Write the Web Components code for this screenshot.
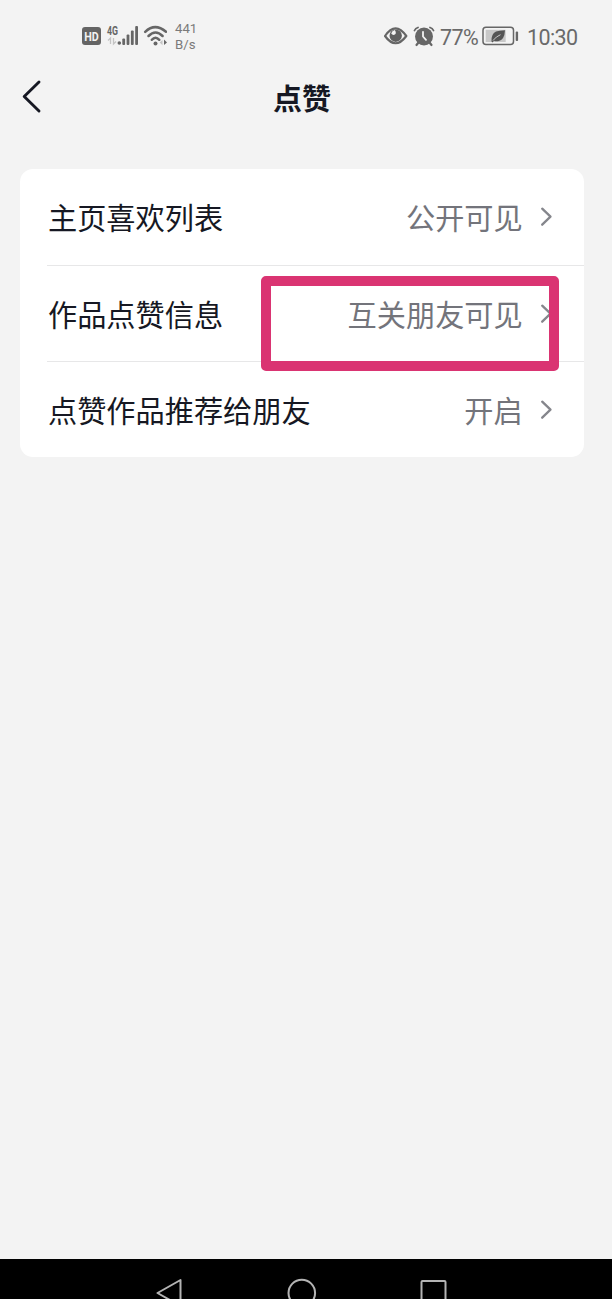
<!DOCTYPE html>
<html lang="zh-CN">
<head>
<meta charset="utf-8">
<meta name="viewport" content="width=device-width, initial-scale=1">
<title>点赞</title>
<style>
    html, body {
        margin: 0;
        height: 100%;
        overflow: hidden;
    }
    body {
        background: #f3f3f3;
        color: #161823;
        font-family: "Noto Sans CJK SC", sans-serif;
    }
</style>
</head>
<body>
<app-screen>
    <status-bar slot="status" speed="441" unit="B/s" battery="77%" time="10:30"></status-bar>
    <nav-header slot="header">点赞</nav-header>
    <setting-list>
        <setting-row value="公开可见">主页喜欢列表</setting-row>
        <setting-row value="互关朋友可见" marked>作品点赞信息</setting-row>
        <setting-row value="开启">点赞作品推荐给朋友</setting-row>
    </setting-list>
    <system-keys slot="keys"></system-keys>
</app-screen>

<script>
// Attach an open shadow root and fill it
function render(host, html) {
    host.attachShadow({ mode: 'open' }).innerHTML = html;
}

class AppScreen extends HTMLElement {
    constructor() {
        super();
        render(this, `
            <style>
                :host {
                    display: flex;
                    flex-direction: column;
                    height: 1299px;
                    width: 612px;
                    overflow: hidden;
                }
                main { flex: 1; padding: 39px 28px 0 20px; }
            </style>
            <slot name="status"></slot>
            <slot name="header"></slot>
            <main><slot></slot></main>
            <slot name="keys"></slot>
        `);
    }
}

class StatusBar extends HTMLElement {
    connectedCallback() {
        if (this.shadowRoot) return;
        render(this, `
            <style>
                :host {
                    display: flex;
                    justify-content: space-between;
                    align-items: center;
                    box-sizing: border-box;
                    height: 64px;
                    padding: 8px 34px 0 82px;
                    color: #6a6a6a;
                    font-family: Roboto, "Noto Sans", sans-serif;
                }
                .group { display: flex; align-items: center; }
                svg { display: block; flex: none; }
                .speed {
                    margin: 1px 0 0 8px;
                    font-size: 13.200px;
                    line-height: 16px;
                    color: #7a7a7a;
                }
                .num {
                    font-size: 21.500px;
                    line-height: 24px;
                    letter-spacing: -0.600px;
                    white-space: nowrap;
                }
                .battery { width: 38px; margin: 3px 4px 0 5px; }
                .time { width: 51px; margin-top: 3px; }
                .battery-icon { margin-right: 8px; }
            </style>
            <div class="group">
                <svg width="85" height="24" viewBox="0 0 85 24">
                    <rect x="0" y="3" width="19" height="18" rx="3" fill="#646464"/>
                    <text x="9.5" y="16.500" text-anchor="middle" textLength="14.500" lengthAdjust="spacingAndGlyphs"
                        font-family="Roboto" font-size="12.500" font-weight="700" fill="#f2f2f2">HD</text>
                    <text x="25" y="10.800" textLength="11" lengthAdjust="spacingAndGlyphs"
                        font-family="Roboto" font-size="12.500" font-weight="700" fill="#666">4G</text>
                    <path d="M28.500 20v-6l-2.500 2.500M31.500 14v6l2.500-2.500" fill="none" stroke="#c4c4c4" stroke-width="1.300"/>
                    <g fill="#666">
                        <circle cx="37.300" cy="19" r="1.800"/>
                        <rect x="40.300" y="14.500" width="2.800" height="6.500" rx="1"/>
                        <rect x="44.600" y="10.500" width="2.800" height="10.500" rx="1"/>
                        <rect x="48.900" y="6.500" width="2.800" height="14.500" rx="1"/>
                        <rect x="53.200" y="2" width="2.800" height="19" rx="1"/>
                    </g>
                    <g fill="none" stroke="#666" stroke-width="2.500" stroke-linecap="round">
                        <path d="M63.200 7.800Q73-1.500 84 7.800"/>
                        <path d="M66.500 12Q73.500 5 80.600 12"/>
                        <path d="M69.800 15.800Q73.500 11.500 77.300 15.800"/>
                    </g>
                    <circle cx="73.500" cy="19.500" r="2" fill="#666"/>
                    <path d="M80.500 16v5.200l-2.800-2.600z" fill="#c4c4c4"/>
                    <path d="M82 15.500v5.500l3-2.600z" fill="#666"/>
                </svg>
                <div class="speed"><div>${this.getAttribute('speed')}</div><div>${this.getAttribute('unit')}</div></div>
            </div>
            <div class="group">
                <svg width="51" height="22" viewBox="0 0 51 22">
                    <path d="M1 11Q11.500-4.300 22.300 11Q11.500 25.500 1 11Z" fill="none" stroke="#666" stroke-width="2.200" stroke-linejoin="round"/>
                    <circle cx="11.700" cy="10.700" r="6.200" fill="#606060"/>
                    <path d="M10.800 5Q12.800 8.300 10.900 9.500Q8.800 10.700 7.200 8.500Q8 5.700 10.800 5Z" fill="#f3f3f3"/>
                    <g stroke="#666" stroke-linecap="round" fill="none">
                        <path d="M30.500 5.500Q31.500 3.300 34 2.500M46 2.500Q48.500 3.300 49.500 5.500" stroke-width="1.800"/>
                        <path d="M34.500 17.500l-2 2.500M45.500 17.500l2 2.500" stroke-width="2.200"/>
                    </g>
                    <circle cx="40" cy="11.500" r="9" fill="#666"/>
                    <path d="M39 6.800V11.500L42 14.800" fill="none" stroke="#f2f2f2" stroke-width="1.800" stroke-linecap="round"/>
                </svg>
                <span class="num battery">${this.getAttribute('battery')}</span>
                <svg class="battery-icon" width="37" height="20" viewBox="0 0 37 20">
                    <rect x="1" y="1.200" width="30.500" height="17.400" rx="3" fill="none" stroke="#666" stroke-width="1.500"/>
                    <rect x="3.700" y="3.800" width="20" height="12.200" fill="#c8c8c8"/>
                    <path d="M9.500 15.500Q9 8 14 5.500Q17 4.500 23 4.200Q22.500 14.500 16 15.200Q13.500 15.300 12 14.700L10.500 16.500Z" fill="#555"/>
                    <path d="M11 14.500Q14 10.500 18.500 8.700" fill="none" stroke="#c8c8c8" stroke-width="1"/>
                    <rect x="33.700" y="5.500" width="2.400" height="9.500" rx="1" fill="#666"/>
                </svg>
                <span class="num time">${this.getAttribute('time')}</span>
            </div>
        `);
    }
}

class NavHeader extends HTMLElement {
    constructor() {
        super();
        render(this, `
            <style>
                :host {
                    display: grid;
                    grid-template-columns: 60px 1fr 60px;
                    align-items: center;
                    height: 66px;
                    margin-right: 8px;
                }
                h1 {
                    margin: 0;
                    font-size: 29px;
                    line-height: 42px;
                    font-weight: 700;
                    text-align: center;
                }
                svg { display: block; margin: 0 0 2px 20px; }
            </style>
            <svg width="24" height="36" viewBox="0 0 24 36">
                <path d="M19 4L4.200 18.500L19 33" fill="none" stroke="#161823" stroke-width="2.900" stroke-linecap="round" stroke-linejoin="round"/>
            </svg>
            <h1><slot></slot></h1>
        `);
    }
}

class SettingList extends HTMLElement {
    constructor() {
        super();
        render(this, `
            <style>
                :host {
                    display: block;
                    background: #fff;
                    border-radius: 13px;
                }
                ::slotted(:not(:last-child)) { --line: #e7e7e8; }
                ::slotted(:last-child) { --height: 95px; }
            </style>
            <slot></slot>
        `);
    }
}

class SettingRow extends HTMLElement {
    connectedCallback() {
        if (this.shadowRoot) return;
        render(this, `
            <style>
                :host {
                    display: block;
                    position: relative;
                    padding-left: 27px;
                    font-size: 29.200px;
                    line-height: 44px;
                }
                .row {
                    display: flex;
                    align-items: center;
                    box-sizing: border-box;
                    height: var(--height, 96.600px);
                    padding: 0 31.300px 1px 1px;
                    border-bottom: 1.300px solid var(--line, transparent);
                }
                .label { flex: 1; }
                .value { color: #73747b; }
                svg { display: block; margin-left: 16px; }
                /* Highlight frame laid over the row */
                .mark {
                    position: absolute;
                    left: 241px;
                    top: 10.200px;
                    width: 298px;
                    height: 95px;
                    box-sizing: border-box;
                    border: 10px solid #da3472;
                    border-radius: 5px;
                    z-index: 1;
                }
            </style>
            <div class="row">
                <span class="label"><slot></slot></span>
                <span class="value">${this.getAttribute('value')}</span>
                <svg width="14" height="22" viewBox="0 0 14 22">
                    <path d="M3.200 3.700L11.500 11.700L3.200 19.700" fill="none" stroke="#85868c" stroke-width="2.300" stroke-linecap="round" stroke-linejoin="round"/>
                </svg>
            </div>
            ${this.hasAttribute('marked') ? '<div class="mark"></div>' : ''}
        `);
    }
}

class SystemKeys extends HTMLElement {
    constructor() {
        super();
        render(this, `
            <style>
                :host {
                    display: block;
                    height: 40px;
                    background: #000;
                    overflow: hidden;
                }
                .keys {
                    display: flex;
                    justify-content: space-between;
                    padding: 19px 164px 0 155px;
                }
                svg { display: block; }
                svg * { fill: none; stroke: #b4b4b4; stroke-width: 2; stroke-linejoin: round; }
            </style>
            <div class="keys">
                <svg width="30" height="30" viewBox="0 0 30 30"><path d="M25.500 2V28L2.500 15Z"/></svg>
                <svg width="30" height="30" viewBox="0 0 30 30"><circle cx="14.800" cy="15" r="13.300"/></svg>
                <svg width="30" height="30" viewBox="0 0 30 30"><rect x="3.500" y="3" width="24" height="24" rx="1"/></svg>
            </div>
        `);
    }
}

customElements.define('app-screen', AppScreen);
customElements.define('status-bar', StatusBar);
customElements.define('nav-header', NavHeader);
customElements.define('setting-list', SettingList);
customElements.define('setting-row', SettingRow);
customElements.define('system-keys', SystemKeys);
</script>
</body>
</html>
